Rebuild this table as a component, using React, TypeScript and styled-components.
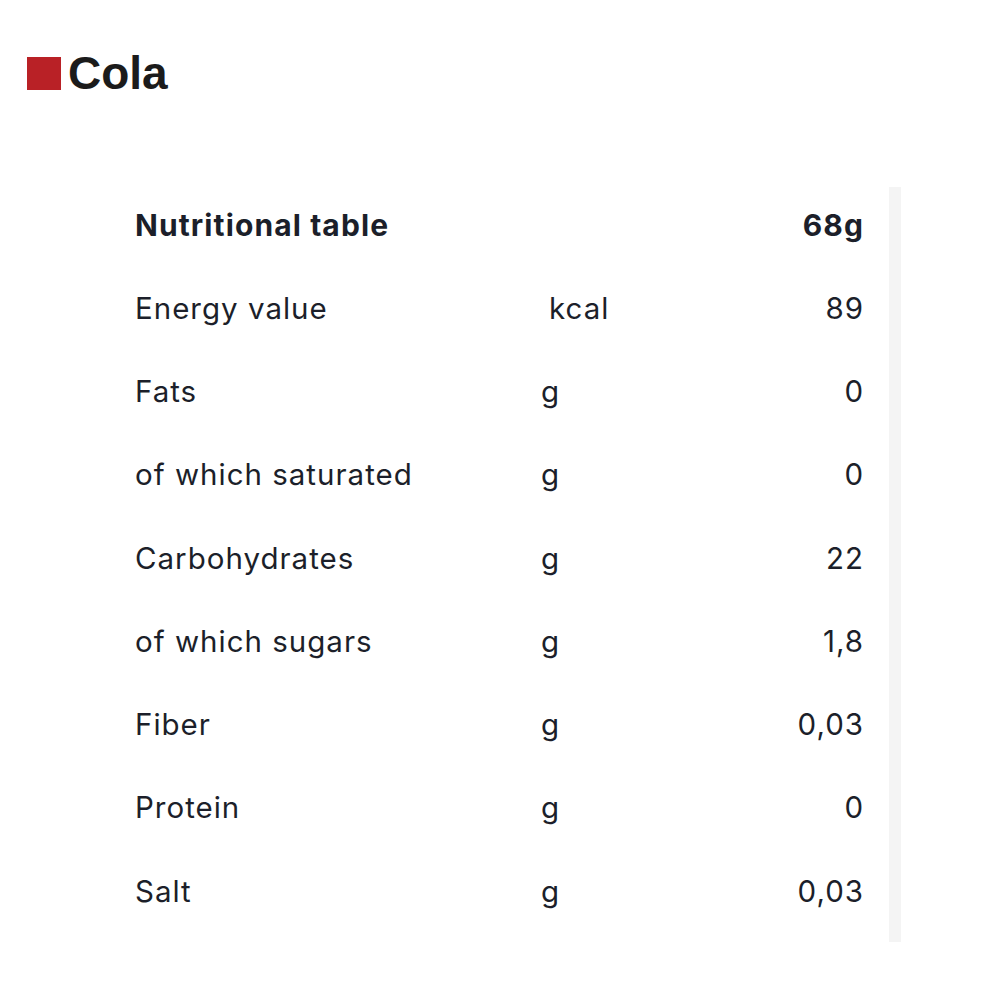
import React from "react";
import styled, { createGlobalStyle } from "styled-components";

const Global = createGlobalStyle`
  html, body { margin: 0; padding: 0; background: #ffffff; }
  body { font-family: Inter, "Noto Sans", sans-serif; }
`;

const Page = styled.div`
  width: 1000px;
  height: 1000px;
  background: #fff;
  display: flex;
  flex-direction: column;
  padding-top: 53px;
  box-sizing: border-box;
`;

const TitleRow = styled.h1`
  margin: 0 0 0 27px;
  display: flex;
  align-items: center;
  gap: 7px;
  font-family: "Liberation Sans", Arial, sans-serif;
  font-weight: 700;
  font-size: 46px;
  line-height: 40px;
  color: #1b1b1b;
`;

const Square = styled.span`
  width: 34px;
  height: 33px;
  background: #b92126;
  display: inline-block;
`;

const Panel = styled.div`
  margin: 90px 0 0 135px;
  display: flex;
  gap: 25px;
`;

const Table = styled.div`
  width: 729px;
  display: flex;
  flex-direction: column;
`;

const Row = styled.div<{ $head?: boolean }>`
  height: 83.25px;
  display: grid;
  grid-template-columns: 406px 1fr auto;
  align-items: center;
  font-size: ${(p) => (p.$head ? 30 : 29.5)}px;
  color: #1c1f2a;
  font-weight: ${(p) => (p.$head ? 700 : 400)};
  letter-spacing: ${(p) => (p.$head ? 1.1 : 1)}px;
`;

const Unit = styled.span<{ $shift: number }>`
  padding-left: ${(p) => p.$shift}px;
`;

const Value = styled.span`
  text-align: right;
`;

const Track = styled.div`
  width: 12px;
  height: 755px;
  margin-top: 4px;
  background: #f4f4f4;
`;

const rows: [string, string, string][] = [
  ["Energy value", "kcal", "89"],
  ["Fats", "g", "0"],
  ["of which saturated", "g", "0"],
  ["Carbohydrates", "g", "22"],
  ["of which sugars", "g", "1,8"],
  ["Fiber", "g", "0,03"],
  ["Protein", "g", "0"],
  ["Salt", "g", "0,03"],
];

export default function App() {
  return (
    <Page>
      <Global />
      <TitleRow>
        <Square />
        Cola
      </TitleRow>
      <Panel>
        <Table>
          <Row $head>
            <span>Nutritional table</span>
            <span />
            <Value>68g</Value>
          </Row>
          {rows.map(([n, u, v]) => (
            <Row key={n}>
              <span>{n}</span>
              <Unit $shift={u === "kcal" ? 8 : 0}>{u}</Unit>
              <Value>{v}</Value>
            </Row>
          ))}
        </Table>
        <Track />
      </Panel>
    </Page>
  );
}
